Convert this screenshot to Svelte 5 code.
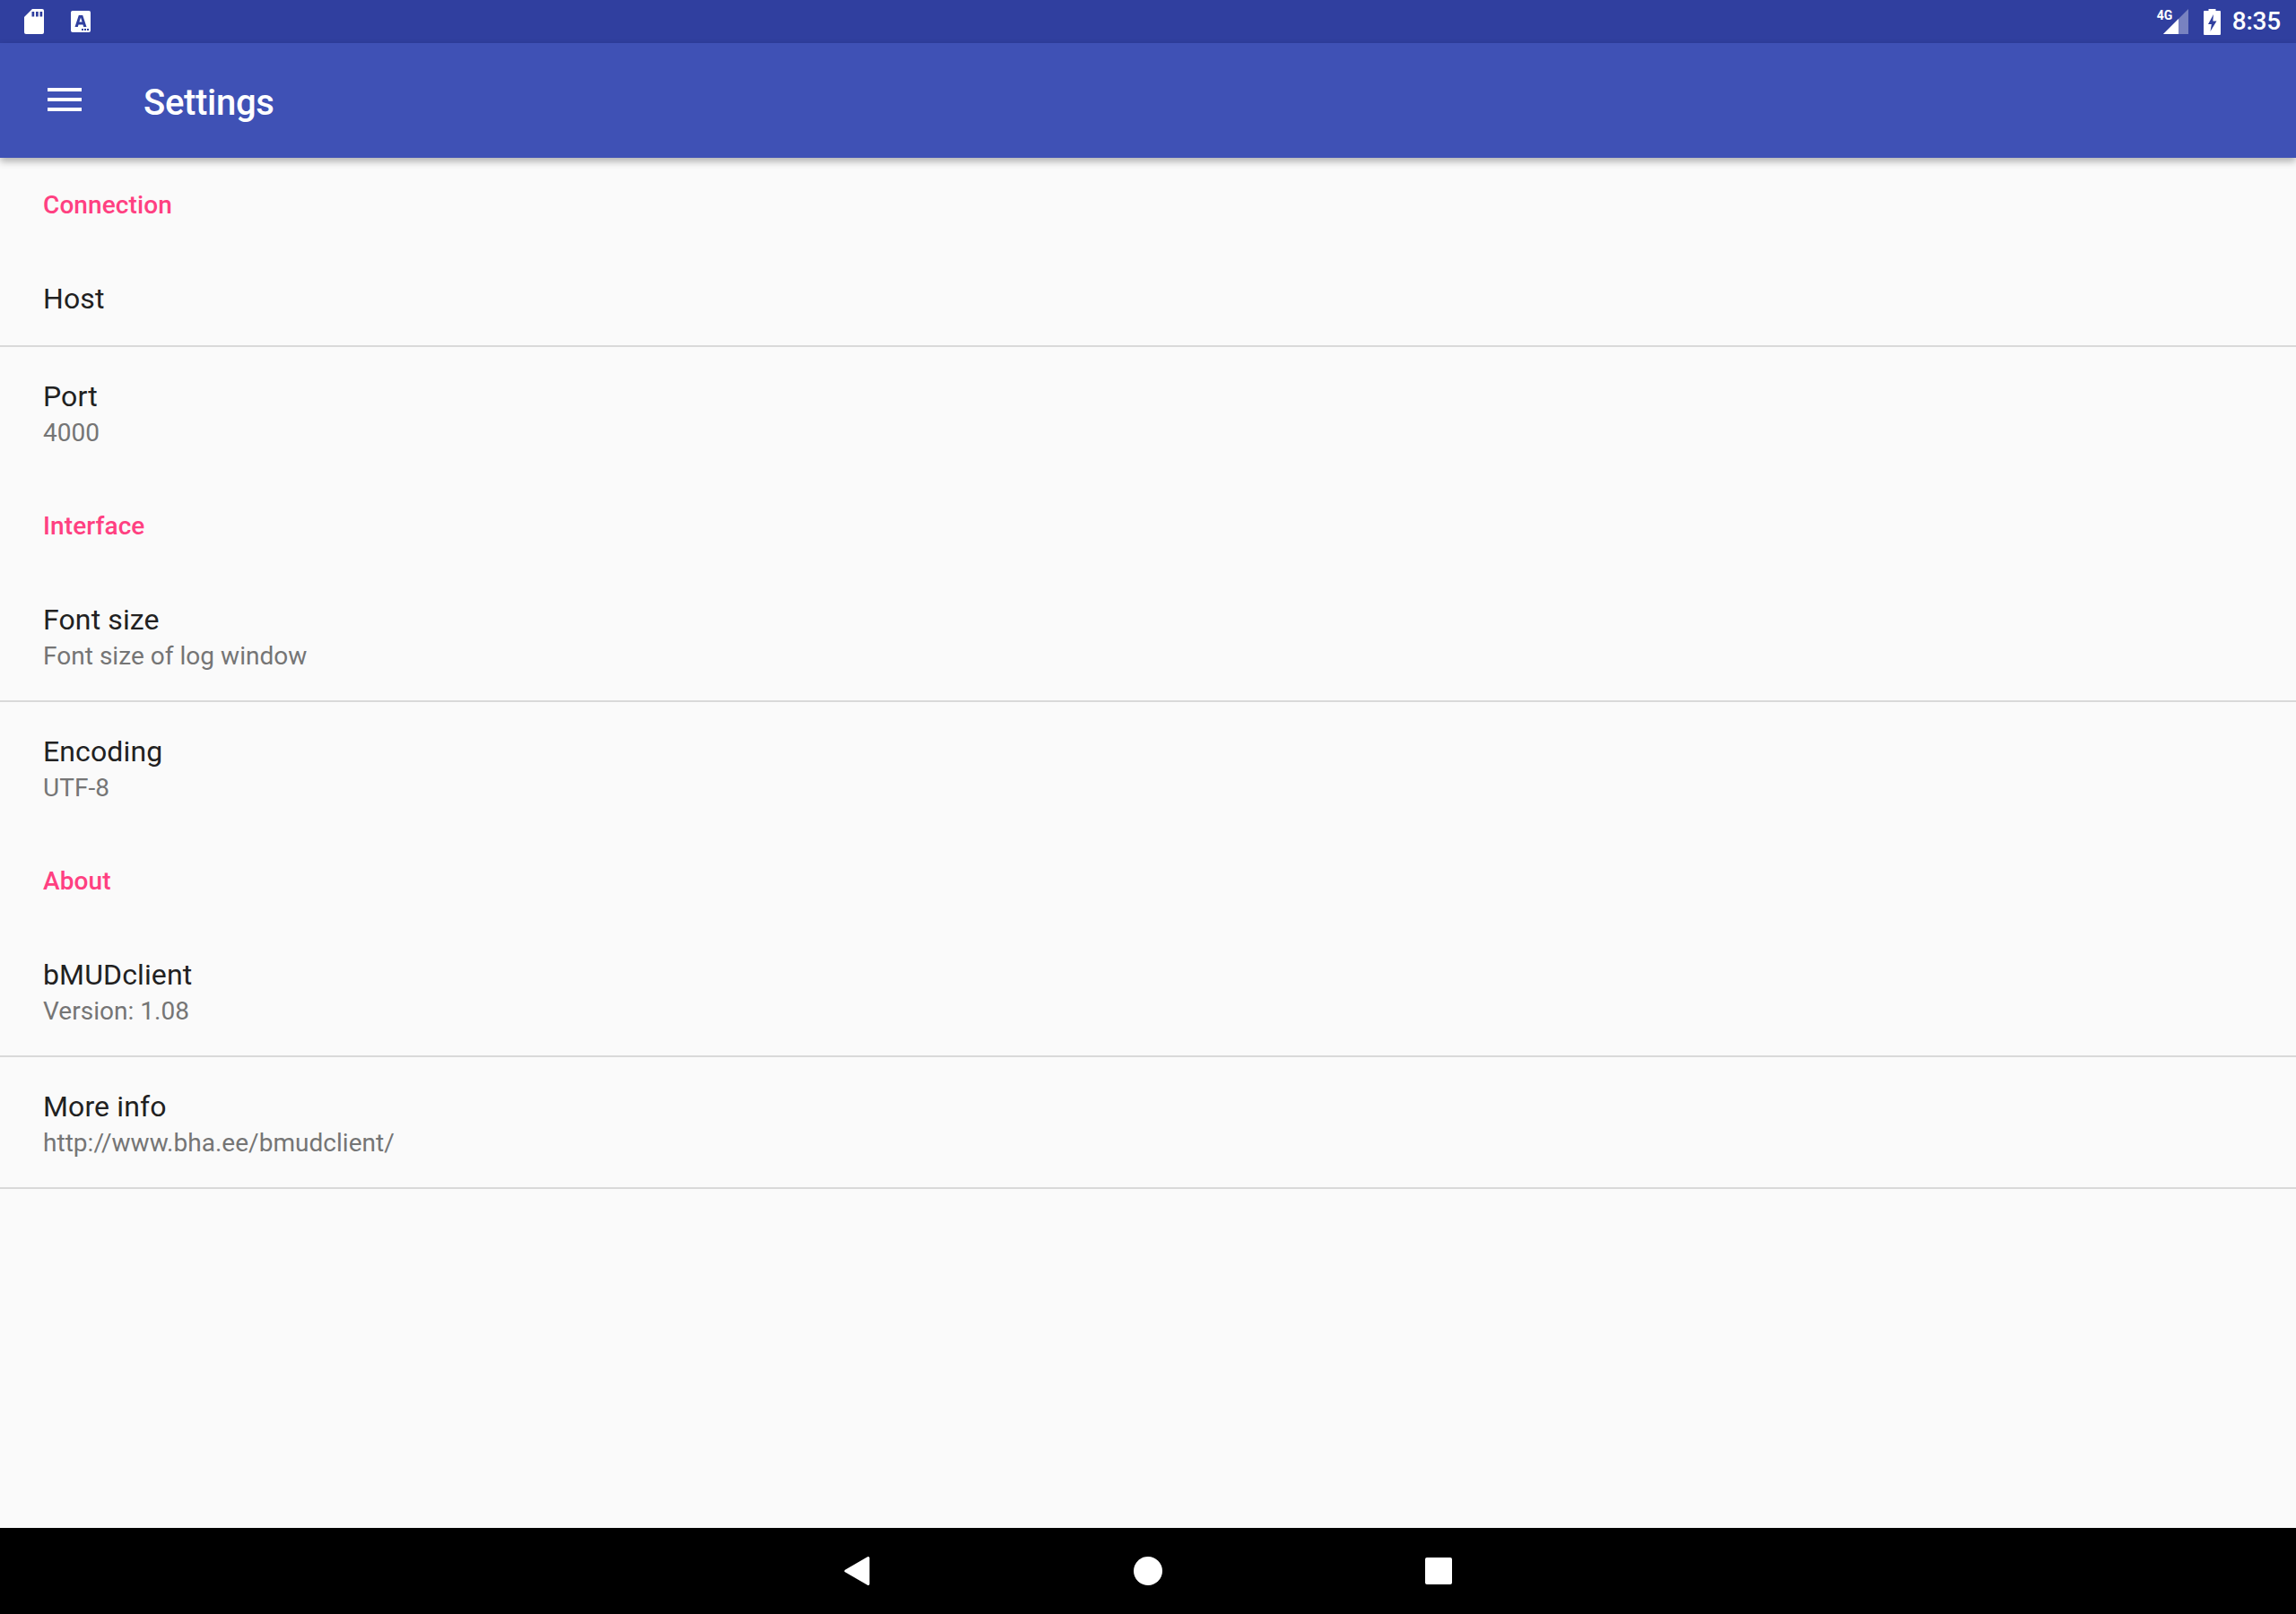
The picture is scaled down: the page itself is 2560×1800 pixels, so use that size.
<script lang="ts">
  type Item = { title: string; summary?: string; divider?: boolean };
  type Group = { name: string; items: Item[] };

  const groups: Group[] = [
    {
      name: "Connection",
      items: [{ title: "Host", divider: true }, { title: "Port", summary: "4000" }]
    },
    {
      name: "Interface",
      items: [
        { title: "Font size", summary: "Font size of log window", divider: true },
        { title: "Encoding", summary: "UTF-8" }
      ]
    },
    {
      name: "About",
      items: [
        { title: "bMUDclient", summary: "Version: 1.08", divider: true },
        { title: "More info", summary: "http://www.bha.ee/bmudclient/", divider: true }
      ]
    }
  ];
</script>

<div class="screen">
  <div class="status-bar">
    <div class="status-left">
      <svg width="22" height="28" viewBox="0 0 22 28">
        <path d="M9 0h11a2 2 0 0 1 2 2v24a2 2 0 0 1-2 2H2a2 2 0 0 1-2-2V9z" fill="#fff" />
        <path d="M8.500 3h2.700v5.500H8.500zM13 3h2.700v5.500H13zM17.500 3h2.700v5.500h-2.700z" fill="#303f9f" />
      </svg>
      <svg width="22" height="24" viewBox="0 0 22 24">
        <rect width="22" height="24" rx="2" fill="#fff" />
        <path d="M8.800 5h4.400l4.300 13h-3.300l-.7-2.600H8.500L7.800 18H4.500zM9.400 12.500h3.200L11 7.500z" fill="#303f9f" fill-rule="evenodd" />
        <path d="M12 20h2v2h-2zM15 20h2v2h-2zM18 20h2v2h-2z" fill="#303f9f" />
      </svg>
    </div>
    <div class="status-right">
      <span class="net">4G</span>
      <svg class="signal" width="28" height="28" viewBox="0 0 28 28">
        <path d="M28 0v28H0z" fill="#fff" fill-opacity="0.35" />
        <path d="M17 11v17H0z" fill="#fff" />
      </svg>
      <svg class="battery" width="19" height="29" viewBox="0 0 19 29">
        <path d="M5.500 0h8v2H18a1 1 0 0 1 1 1v25a1 1 0 0 1-1 1H1a1 1 0 0 1-1-1V3a1 1 0 0 1 1-1h4.500z" fill="#fff" />
        <path d="M11 6L5 17h3.800L7.500 25l7-11.500h-4.200z" fill="#303f9f" />
      </svg>
      <span class="clock">8:35</span>
    </div>
  </div>

  <header class="toolbar">
    <div class="menu"><span></span><span></span><span></span></div>
    <div class="title">Settings</div>
  </header>

  <main class="list">
    {#each groups as group}
      <div class="category">{group.name}</div>
      {#each group.items as item}
        <div class="item" class:single={!item.summary} class:divider={item.divider}>
          <div class="item-title">{item.title}</div>
          {#if item.summary}
            <div class="item-summary">{item.summary}</div>
          {/if}
        </div>
      {/each}
    {/each}
  </main>

  <nav class="nav-bar">
    <div class="nav-key">
      <svg width="30" height="34" viewBox="0 0 30 34">
        <path d="M27 2.500v29L2 17z" fill="#fff" stroke="#fff" stroke-width="3" stroke-linejoin="round" />
      </svg>
    </div>
    <div class="nav-key">
      <svg width="32" height="32" viewBox="0 0 32 32"><circle cx="16" cy="16" r="16" fill="#fff" /></svg>
    </div>
    <div class="nav-key">
      <svg width="30" height="30" viewBox="0 0 30 30"><rect width="30" height="30" rx="2" fill="#fff" /></svg>
    </div>
  </nav>
</div>

<style>
  :global(body) {
    margin: 0;
    background: #fafafa;
  }
  .screen {
    display: flex;
    flex-direction: column;
    width: 2560px;
    height: 1800px;
    overflow: hidden;
    font-family: Roboto, "Liberation Sans", sans-serif;
  }
  .status-bar {
    flex: 0 0 48px;
    display: flex;
    align-items: center;
    justify-content: space-between;
    background: #303f9f;
    color: #fff;
    padding: 0 17px 0 27px;
  }
  .status-left {
    display: flex;
    align-items: center;
    gap: 30px;
  }
  .status-right {
    display: flex;
    align-items: center;
    position: relative;
  }
  .net {
    position: absolute;
    left: -7px;
    top: 2px;
    font-size: 14px;
    line-height: 14px;
    font-weight: 700;
  }
  .signal {
    margin-right: 17px;
  }
  .battery {
    margin-right: 13px;
  }
  .clock {
    font-size: 28px;
    line-height: 32px;
    font-weight: 500;
    letter-spacing: -0.2px;
  }
  .toolbar {
    flex: 0 0 128px;
    display: flex;
    align-items: center;
    background: #3f51b5;
    color: #fff;
    box-shadow: 0 4px 8px rgba(0, 0, 0, 0.3);
    position: relative;
    padding-left: 53px;
  }
  .menu {
    display: flex;
    flex-direction: column;
    gap: 7px;
    width: 38px;
    margin-right: 69px;
    margin-bottom: 2px;
  }
  .menu span {
    height: 4px;
    background: #fff;
  }
  .title {
    font-size: 40px;
    font-weight: 500;
    letter-spacing: -0.3px;
    margin-top: 4px;
  }
  .list {
    flex: 1;
    background: #fafafa;
  }
  .category {
    height: 102px;
    box-sizing: border-box;
    padding: 36px 48px 0;
    font-size: 28px;
    line-height: 34px;
    font-weight: 500;
    letter-spacing: 0.1px;
    color: #ff4081;
  }
  .item {
    height: 147px;
    box-sizing: border-box;
    padding: 35px 48px 0;
    border-bottom: 2px solid transparent;
  }
  .item.single {
    height: 109px;
  }
  .item.divider {
    border-bottom-color: #d9d9d9;
  }
  .item-title {
    font-size: 32px;
    line-height: 40px;
    letter-spacing: 0.12px;
    color: #212121;
  }
  .item-summary {
    font-size: 28px;
    line-height: 40px;
    margin-top: 1px;
    letter-spacing: 0.03px;
    color: #757575;
  }
  .nav-bar {
    flex: 0 0 96px;
    background: #000;
    display: flex;
    align-items: center;
    justify-content: center;
  }
  .nav-key {
    flex: 0 0 324px;
    display: flex;
    justify-content: center;
  }
</style>
